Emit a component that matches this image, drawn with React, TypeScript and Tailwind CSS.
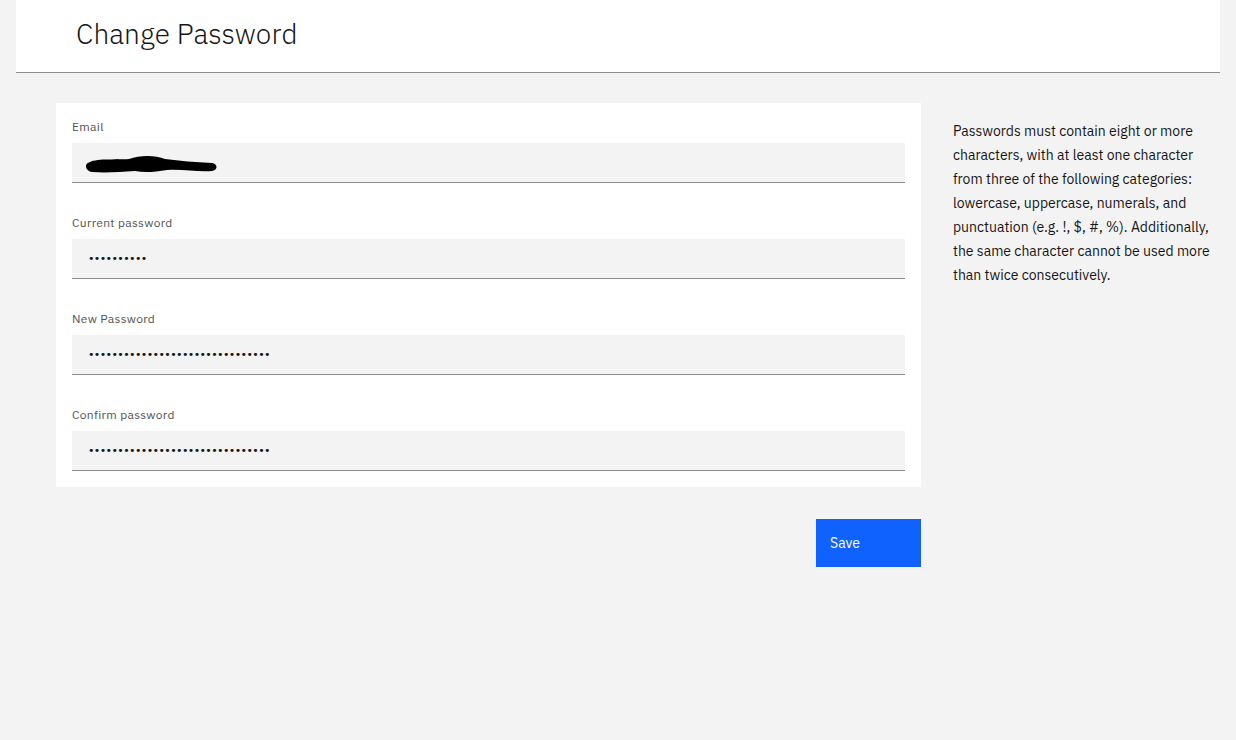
import React from "react";

// Change Password page — header bar, form card on the left, password rules on the right.

const FONT = { fontFamily: '"IBM Plex Sans", "Open Sans", "Liberation Sans", sans-serif' };

function Field({ label, children }: { label: string; children: React.ReactNode }) {
  return (
    <div className="mb-8 last:mb-0">
      <label className="block text-xs leading-4 text-[#525252] tracking-[0.32px] mb-2">{label}</label>
      <div className="h-10 bg-[#f3f3f3] border-b border-[#8d8d8d] flex items-center px-4">{children}</div>
    </div>
  );
}

function Dots({ n }: { n: number }) {
  return (
    <span className="text-[#161616] text-[11px] tracking-[-0.62px] leading-none" style={{ fontFamily: '"DejaVu Sans", sans-serif' }}>
      {"•".repeat(n)}
    </span>
  );
}

export default function App() {
  return (
    <div className="min-h-[740px] bg-[#f3f3f3] text-[#161616]" style={FONT}>
      <header className="mx-4 h-[73px] bg-white border-b border-[#8d8d8d] flex items-center pl-[60px]">
        <h1 className="text-[28px] font-light tracking-[0.1px] text-[#161616] -mt-1">Change Password</h1>
      </header>

      <div className="flex items-start pl-14 pt-[30px]">
        <div className="w-[865px]">
          <form className="bg-white p-4">
            <Field label="Email">
              {/* redacted address */}
              <svg width="134" height="22" viewBox="0 0 134 22" className="-ml-[3px] mt-1">
                <path
                  d="M3 9 C10 4 30 6 44 5 C55 1 70 1 80 5 C95 7 110 8 127 9 C133 10 133 16 127 17 C112 18 98 15 82 16 C70 18 60 19 50 17 C35 18 20 19 7 18 C1 17 -1 11 3 9 Z"
                  fill="#000"
                />
              </svg>
            </Field>
            <Field label="Current password">
              <Dots n={10} />
            </Field>
            <Field label="New Password">
              <Dots n={31} />
            </Field>
            <Field label="Confirm password">
              <Dots n={31} />
            </Field>
          </form>
          <div className="flex justify-end mt-8">
            <button className="w-[105px] h-12 bg-[#0f62fe] text-white text-sm text-left pl-[14px]">Save</button>
          </div>
        </div>

        <p className="ml-8 w-[262px] pt-[16px] text-sm leading-6 text-[#161616]">
          Passwords must contain eight or more characters, with at least one character from three of the following
          categories: lowercase, uppercase, numerals, and punctuation (e.g. !, $, #, %). Additionally, the same
          character cannot be used more than twice consecutively.
        </p>
      </div>
    </div>
  );
}
